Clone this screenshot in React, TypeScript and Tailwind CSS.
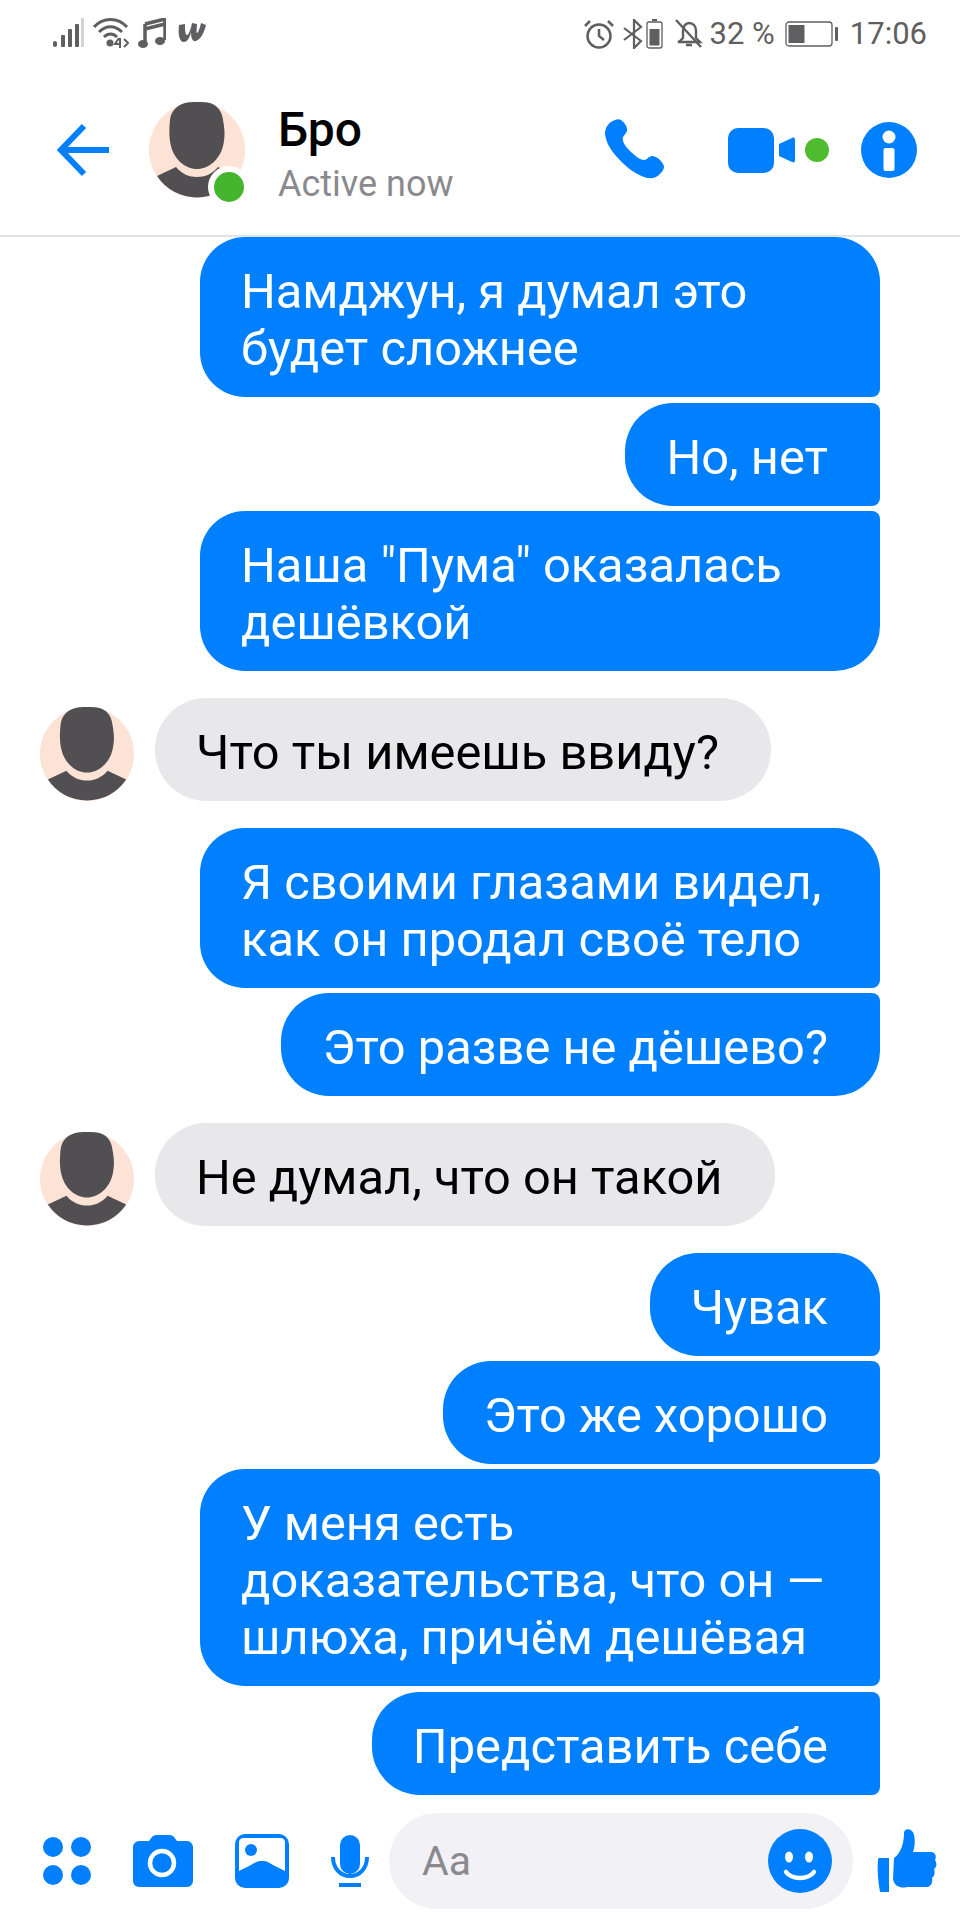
const BLUE = "#0080ff"
const GRAY = "#5f5e60"

function Avatar({ className }: { className: string }) {
  return (
    <svg viewBox="0 0 96 96" className={className}>
      <circle cx="48" cy="48" r="48" fill="#fde2d6" />
      <path
        d="M36 1 C42 -0.5 54 -0.5 61 1 C68 3 73 9 74 18 C76 28 76 36 74 44 C71 57 60 67 48 67 C36 67 25 57 22 44 C20 36 20 28 21 18 C22 9 28 3 36 1 Z"
        fill="#514f52"
      />
      <path
        d="M8 74 L27 65 C33 72 40 75 48 75 C56 75 63 72 69 65 L88 74 A48 48 0 0 1 8 74 Z"
        fill="#514f52"
      />
    </svg>
  )
}

function StatusLeft() {
  return (
    <div className="flex items-center">
      <svg viewBox="0 0 32 30" className="ml-[53px] h-[30px] w-[32px]">
        <rect x="0" y="23" width="4" height="6" rx="2" fill={GRAY} />
        <rect x="8" y="17" width="4" height="12" rx="1" fill={GRAY} />
        <rect x="15" y="11" width="4" height="18" rx="1" fill={GRAY} />
        <rect x="22" y="6" width="4" height="23" rx="1" fill={GRAY} />
        <rect x="28" y="0" width="3" height="29" fill="#d4d4d6" />
      </svg>
      <svg viewBox="0 0 36 30" className="ml-[8px] h-[30px] w-[36px]">
        <path d="M1 9 C10 -1 25 -1 34 9" fill="none" stroke={GRAY} strokeWidth="3" />
        <path d="M6 14 C13 7 22 7 29 14" fill="none" stroke={GRAY} strokeWidth="3" />
        <path d="M11 19 C15 15 20 15 24 19" fill="none" stroke={GRAY} strokeWidth="3" />
        <circle cx="17" cy="25" r="3.5" fill={GRAY} />
        <path d="M26 20 L22 26 H27 V30 M27 20 V29 M31 21 L35 25 L31 29" fill="none" stroke={GRAY} strokeWidth="2" />
      </svg>
      <svg viewBox="0 0 28 30" className="ml-[9px] h-[30px] w-[28px]">
        <path d="M7 6 L27 1 V22 M7 6 V26 M7 6 V11 L27 6" fill="none" stroke={GRAY} strokeWidth="3.5" />
        <ellipse cx="5" cy="26" rx="5" ry="4" fill={GRAY} />
        <ellipse cx="22" cy="23" rx="5" ry="4" fill={GRAY} />
      </svg>
      <svg viewBox="0 0 30 24" className="ml-[11px] h-[24px] w-[30px]">
        <path
          d="M2 4 C1 12 2 20 6 21 C10 22 13 16 14 11 C14 16 15 21 19 20 C24 18 27 12 29 4 L24 2 C23 7 21 12 20 12 C19 12 20 6 20 3 L15 2 C14 7 12 14 10 14 C8 14 8 7 8 3 Z"
          fill={GRAY}
        />
      </svg>
    </div>
  )
}

function StatusRight() {
  return (
    <div className="flex items-center">
      <svg viewBox="0 0 30 30" className="h-[30px] w-[30px]">
        <circle cx="15" cy="17" r="11.5" fill="none" stroke={GRAY} strokeWidth="2.5" />
        <path d="M15 10 V17 L20 21" fill="none" stroke={GRAY} strokeWidth="2.5" />
        <path d="M1 7 L6 2 M29 7 L24 2" stroke={GRAY} strokeWidth="2.5" />
      </svg>
      <svg viewBox="0 0 20 30" className="ml-[9px] h-[30px] w-[20px]">
        <path d="M1 9 L18 22 L11 29 V1 L18 8 L1 21" fill="none" stroke={GRAY} strokeWidth="2.2" />
      </svg>
      <svg viewBox="0 0 17 31" className="ml-[3px] h-[31px] w-[17px]">
        <rect x="1" y="4" width="15" height="26" rx="2" fill="none" stroke={GRAY} strokeWidth="1.3" />
        <rect x="6" y="1" width="5" height="2" fill={GRAY} />
        <rect x="3.5" y="11" width="10" height="16.5" fill={GRAY} />
      </svg>
      <svg viewBox="0 0 28 30" className="ml-[12px] h-[30px] w-[28px]">
        <path
          d="M5 22 L8 19 V12 C8 7 11 4 14 4 C18 4 21 7 21 12 V19 L25 23 H3 Z M11 26 H17"
          fill="none"
          stroke={GRAY}
          strokeWidth="2.4"
        />
        <path d="M1 1 L26 28" stroke={GRAY} strokeWidth="2.4" />
      </svg>
      <span className="ml-[7px] text-[31px] leading-none whitespace-nowrap text-[#5f5e60]">32 %</span>
      <svg viewBox="0 0 54 26" className="ml-[10px] h-[26px] w-[54px]">
        <rect x="1" y="1" width="46" height="24" rx="3" fill="none" stroke={GRAY} strokeWidth="1.3" />
        <rect x="3.5" y="4" width="16" height="18" fill={GRAY} />
        <rect x="50" y="6" width="3" height="14" rx="1" fill={GRAY} />
      </svg>
      <span className="mr-[33px] ml-[11px] text-[31px] leading-none text-[#5f5e60]">17:06</span>
    </div>
  )
}

function Header() {
  return (
    <div className="flex h-[156px] items-start border-b-2 border-[#e4e4e8]">
      <svg viewBox="0 0 54 54" className="mt-[42px] ml-[57px] h-[54px] w-[54px] shrink-0">
        <path d="M52 27 H5 M27 3 L4 27 L27 51" fill="none" stroke={BLUE} strokeWidth="6" />
      </svg>
      <div className="relative mt-[21px] ml-[38px] h-[96px] w-[96px] shrink-0">
        <Avatar className="h-[96px] w-[96px]" />
        <div className="absolute top-[64px] left-[59px] h-[42px] w-[42px] rounded-full border-[6px] border-white bg-[#45b52e]" />
      </div>
      <div className="ml-[33px] w-[201px] pt-[15px]">
        <p className="text-[48px] leading-[67px] font-medium text-black">Бро</p>
        <p className="text-[36px] leading-[42px] text-[#8a8a8e]">Active now</p>
      </div>
      <svg viewBox="0 0 60 60" className="mt-[38px] ml-[126px] h-[60px] w-[60px] shrink-0">
        <path
          d="M10 1 C14 -1 17 1 20 5 C22 8 23 11 21 14 L18 18 C17 21 19 26 24 31 C30 37 35 41 39 41 C42 41 44 37 47 37 C51 37 56 41 58 45 C60 48 59 51 55 55 C50 60 45 60 39 58 C28 54 19 46 11 37 C5 30 1 23 0 15 C0 8 4 3 10 1 Z"
          fill={BLUE}
        />
      </svg>
      <div className="mt-[41px] ml-[63px] flex shrink-0 items-center">
        <div className="h-[45px] w-[46px] rounded-[10px] bg-[#0080ff]" />
        <svg viewBox="0 0 16 26" className="ml-[5px] h-[26px] w-[16px]">
          <path d="M0 7 L13 1 C15 0 16 1 16 3 V23 C16 25 15 26 13 25 L0 19 Z" fill={BLUE} />
        </svg>
        <div className="ml-[10px] h-[24px] w-[24px] rounded-full bg-[#4fbb2f]" />
        <svg viewBox="0 0 56 56" className="ml-[32px] h-[56px] w-[56px]">
          <circle cx="28" cy="28" r="28" fill={BLUE} />
          <circle cx="28" cy="15" r="6.5" fill="white" />
          <rect x="22.5" y="26" width="11" height="23" rx="2" fill="white" />
        </svg>
      </div>
    </div>
  )
}

function Bubble({ className, lines }: { className: string; lines: string[] }) {
  return (
    <div className={`pt-[26px] pr-[52px] pb-[20px] pl-[41px] text-[48.8px] leading-[57px] whitespace-nowrap ${className}`}>
      {lines.map((line) => (
        <div key={line}>{line}</div>
      ))}
    </div>
  )
}

function Incoming({ text }: { text: string }) {
  return (
    <div className="flex items-end">
      <Avatar className="ml-[40px] h-[94px] w-[94px] shrink-0" />
      <Bubble lines={[text]} className="ml-[21px] rounded-[51px] bg-[#e8e7ea] text-black" />
    </div>
  )
}

function Footer() {
  return (
    <div className="mt-[18px] flex items-center">
      <div className="ml-[43px] grid h-[48px] w-[48px] shrink-0 grid-cols-2 gap-x-[7px] gap-y-[8px]">
        <div className="h-[20px] w-[20px] rounded-full bg-[#0080ff]" />
        <div className="h-[20px] w-[20px] rounded-full bg-[#0080ff]" />
        <div className="h-[20px] w-[20px] rounded-full bg-[#0080ff]" />
        <div className="h-[20px] w-[20px] rounded-full bg-[#0080ff]" />
      </div>
      <svg viewBox="0 0 60 52" className="ml-[42px] h-[52px] w-[60px] shrink-0">
        <path
          d="M6 6 H16 L19 2 C20 1 21 0 23 0 H37 C39 0 40 1 41 2 L44 6 H54 C57 6 60 9 60 12 V46 C60 49 57 52 54 52 H6 C3 52 0 49 0 46 V12 C0 9 3 6 6 6 Z"
          fill={BLUE}
        />
        <circle cx="29" cy="28" r="12" fill="none" stroke="white" strokeWidth="4.5" />
      </svg>
      <svg viewBox="0 0 54 54" className="ml-[42px] h-[54px] w-[54px] shrink-0">
        <rect width="54" height="54" rx="10" fill={BLUE} />
        <path
          d="M8 4 H46 C48 4 50 6 50 8 V37 L38 31 C32 27 30 27 27 27 C24 27 22 27 16 31 L4 37 V8 C4 6 6 4 8 4 Z"
          fill="white"
        />
        <circle cx="16" cy="16" r="6" fill={BLUE} />
      </svg>
      <svg viewBox="0 0 38 52" className="ml-[42px] h-[52px] w-[38px] shrink-0">
        <rect x="9" y="0" width="20" height="39" rx="10" fill={BLUE} />
        <path d="M2 22 C2 33 9 41 19 41 C29 41 36 33 36 22" fill="none" stroke={BLUE} strokeWidth="4" />
        <rect x="8" y="48" width="22" height="4" fill={BLUE} />
      </svg>
      <div className="ml-[20px] flex h-[96px] w-[464px] shrink-0 items-center justify-between rounded-[48px] bg-[#f2f2f6] pr-[21px] pl-[33px]">
        <span className="text-[41px] leading-none text-[#8a8a8e]">Aa</span>
        <svg viewBox="0 0 64 64" className="h-[64px] w-[64px]">
          <circle cx="32" cy="32" r="32" fill={BLUE} />
          <ellipse cx="21" cy="28" rx="4" ry="5.5" fill="white" />
          <ellipse cx="41" cy="28" rx="4" ry="5.5" fill="white" />
          <path d="M18 43 C24 51 40 51 46 43" fill="none" stroke="white" strokeWidth="4.5" strokeLinecap="round" />
        </svg>
      </div>
      <svg viewBox="0 0 60 64" className="ml-[24px] h-[64px] w-[60px] shrink-0">
        <path d="M1 30 C1 29 2 29 3 29 H12 V63 H3 C1 52 0 41 1 30 Z" fill={BLUE} />
        <path
          d="M17 29 C24 24 27 14 27 4 C27 0 32 -1 35 2 C39 6 38 18 36 23 H54 C58 23 60 27 58 31 C60 34 60 38 57 40 C58 43 58 47 55 49 C56 53 54 58 50 58 H30 C24 60 17 57 16 50 Z"
          fill={BLUE}
        />
      </svg>
    </div>
  )
}

export default function App() {
  return (
    <div className="flex h-[1920px] w-[960px] flex-col overflow-hidden bg-white font-['Roboto',sans-serif]">
      <div className="flex h-[81px] items-start justify-between pt-[18px]">
        <StatusLeft />
        <StatusRight />
      </div>
      <Header />

      <div className="flex flex-col items-end pr-[80px]">
        <Bubble
          lines={["Намджун, я думал это", "будет сложнее"]}
          className="w-[680px] rounded-tl-[45px] rounded-tr-[45px] rounded-br-[8px] rounded-bl-[45px] bg-[#0080ff] text-white"
        />
        <Bubble
          lines={["Но, нет"]}
          className="mt-[6px] rounded-tl-[48px] rounded-tr-[8px] rounded-br-[8px] rounded-bl-[48px] bg-[#0080ff] text-white"
        />
        <Bubble
          lines={['Наша "Пума" оказалась', "дешёвкой"]}
          className="mt-[5px] w-[680px] rounded-tl-[45px] rounded-tr-[8px] rounded-br-[45px] rounded-bl-[45px] bg-[#0080ff] text-white"
        />
      </div>

      <div className="mt-[27px]">
        <Incoming text="Что ты имеешь ввиду?" />
      </div>

      <div className="mt-[27px] flex flex-col items-end pr-[80px]">
        <Bubble
          lines={["Я своими глазами видел,", "как он продал своё тело"]}
          className="w-[680px] rounded-tl-[45px] rounded-tr-[45px] rounded-br-[8px] rounded-bl-[45px] bg-[#0080ff] text-white"
        />
        <Bubble
          lines={["Это разве не дёшево?"]}
          className="mt-[5px] rounded-tl-[48px] rounded-tr-[8px] rounded-br-[45px] rounded-bl-[48px] bg-[#0080ff] text-white"
        />
      </div>

      <div className="mt-[27px]">
        <Incoming text="Не думал, что он такой" />
      </div>

      <div className="mt-[27px] flex flex-col items-end pr-[80px]">
        <Bubble
          lines={["Чувак"]}
          className="rounded-tl-[48px] rounded-tr-[45px] rounded-br-[8px] rounded-bl-[48px] bg-[#0080ff] text-white"
        />
        <Bubble
          lines={["Это же хорошо"]}
          className="mt-[5px] rounded-tl-[48px] rounded-tr-[8px] rounded-br-[8px] rounded-bl-[48px] bg-[#0080ff] text-white"
        />
        <Bubble
          lines={["У меня есть", "доказательства, что он —", "шлюха, причём дешёвая"]}
          className="mt-[5px] w-[680px] rounded-tl-[45px] rounded-tr-[8px] rounded-br-[8px] rounded-bl-[45px] bg-[#0080ff] text-white"
        />
        <Bubble
          lines={["Представить себе"]}
          className="mt-[6px] rounded-tl-[48px] rounded-tr-[8px] rounded-br-[8px] rounded-bl-[48px] bg-[#0080ff] text-white"
        />
      </div>

      <Footer />
    </div>
  )
}
